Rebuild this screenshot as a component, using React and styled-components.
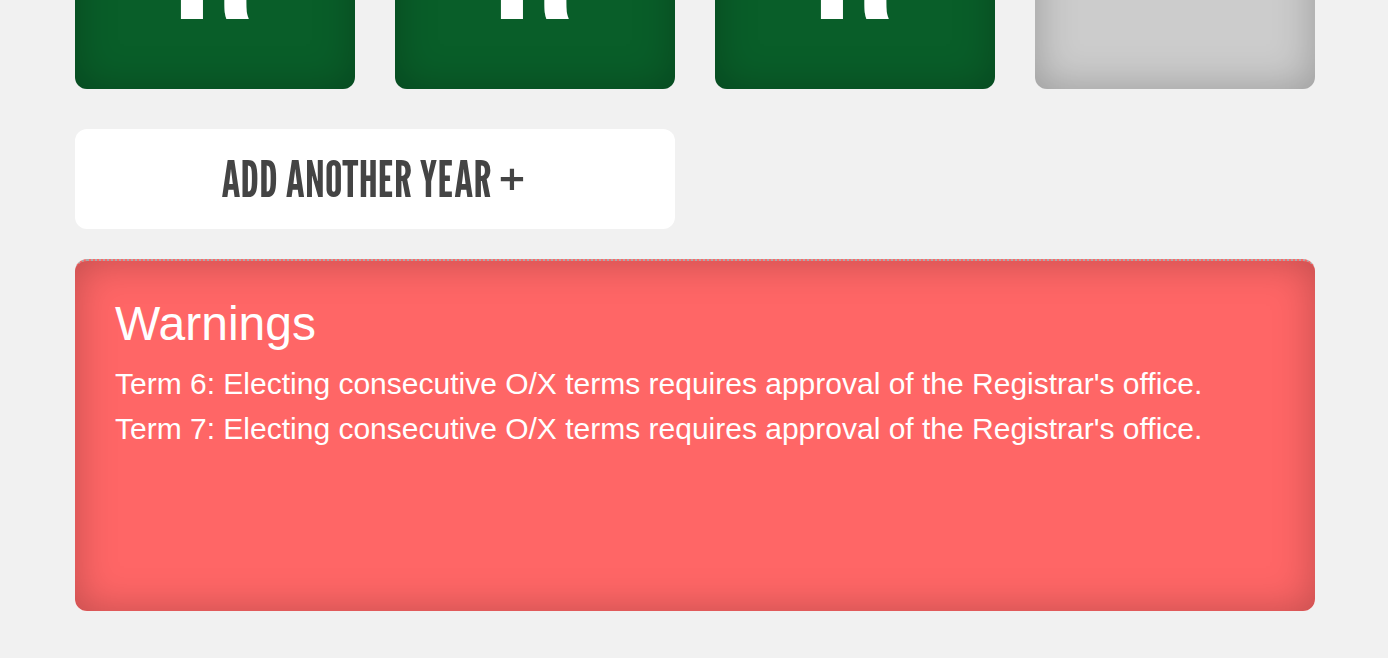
import React from "react";
import styled, { createGlobalStyle } from "styled-components";

const Global = createGlobalStyle`
  * { box-sizing: border-box; }
  body {
    margin: 0;
    background: #f1f1f1;
    font-family: "Helvetica Neue", "Liberation Sans", Arial, sans-serif;
  }
`;

const Page = styled.main`
  padding: 0 73px 47px 75px;
`;

const TermRow = styled.section`
  display: flex;
  gap: 40px;
  align-items: flex-end;
  height: 89px;
  overflow: hidden;
`;

const TermCard = styled.div`
  display: flex;
  flex: 1 1 0;
  align-items: center;
  justify-content: center;
  height: 280px;
  padding: 20px 4px 0 0;
  border-radius: 12px;
  background: ${(p) => (p.$empty ? "#cccccc" : "#095e29")};
  box-shadow: inset 0 0 40px rgba(0, 0, 0, 0.25);
  color: #ffffff;
  font: 200px/240px "Bebas Neue", "League Gothic", "Liberation Sans Narrow", sans-serif;
`;

const AddYear = styled.button`
  display: block;
  width: calc(50% - 20px);
  height: 100px;
  margin: 40px 0 30px;
  padding: 0 4px 0 0;
  border: 0;
  border-radius: 12px;
  background: #ffffff;
  color: #444444;
  font: 50px/56px "League Gothic", "Bebas Neue", "Liberation Sans Narrow", sans-serif;
  text-transform: uppercase;
  cursor: pointer;
`;

const Warnings = styled.section`
  min-height: 352px;
  padding: 35px 40px;
  border-top: 2px dotted #aaaaaa;
  border-radius: 12px;
  background: #ff6666;
  box-shadow: inset 0 0 40px rgba(0, 0, 0, 0.25);
  color: #ffffff;
`;

const Title = styled.h2`
  margin: 0 0 9px;
  font-size: 48px;
  font-weight: 400;
  line-height: 56px;
`;

const Warning = styled.p`
  margin: 0;
  font-size: 30px;
  line-height: 45px;
`;

const terms = ["R", "R", "R", ""];
const warnings = [6, 7];

export default function App() {
  return (
    <>
      <Global />
      <Page>
        <TermRow>
          {terms.map((term, i) => (
            <TermCard key={i} $empty={!term}>
              {term}
            </TermCard>
          ))}
        </TermRow>
        <AddYear type="button">Add another year +</AddYear>
        <Warnings>
          <Title>Warnings</Title>
          {warnings.map((n) => (
            <Warning key={n}>
              Term {n}: Electing consecutive O/X terms requires approval of the Registrar's office.
            </Warning>
          ))}
        </Warnings>
      </Page>
    </>
  );
}
